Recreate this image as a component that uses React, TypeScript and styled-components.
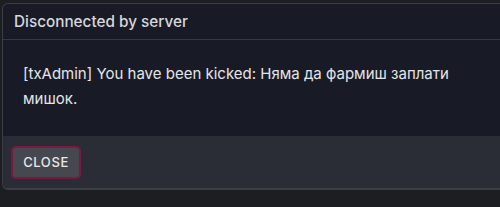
import React from "react";
import styled, { createGlobalStyle } from "styled-components";

const GlobalStyle = createGlobalStyle`
  html, body {
    margin: 0;
    padding: 0;
    background: #1d1e22;
    overflow: hidden;
  }
  body {
    font-family: Inter, "Noto Sans", "Liberation Sans", sans-serif;
  }
`;

const Page = styled.div`
  width: 500px;
  height: 207px;
  padding: 3px 0 0 2px;
  box-sizing: border-box;
  overflow: hidden;
`;

const Dialog = styled.div`
  width: 520px;
  background: #181b26;
  border: 1px solid #3b3e46;
  border-bottom-width: 2px;
  border-radius: 6px;
  overflow: hidden;
  box-sizing: border-box;
`;

const Header = styled.div`
  height: 36px;
  display: flex;
  align-items: center;
  padding: 0 11px;
  border-bottom: 1px solid #353842;
  box-sizing: border-box;
`;

const Title = styled.h1`
  margin: 0;
  font-size: 15.3px;
  font-weight: 500;
  color: #d6d7db;
`;

const Body = styled.div`
  height: 96px;
  padding: 21px 45px 0 20px;
  box-sizing: border-box;
`;

const Message = styled.p`
  margin: 0;
  font-size: 15px;
  line-height: 25px;
  color: #e4e5e8;
`;

const Footer = styled.div`
  height: 52px;
  background: #2a2d35;
  display: flex;
  align-items: center;
  padding: 0 8px;
  box-sizing: border-box;
`;

const Button = styled.button`
  width: 70px;
  height: 33px;
  background: #45484e;
  border: 2px solid #7a1a43;
  border-radius: 5px;
  color: #e8e8ea;
  font-family: Inter, "Noto Sans", "Liberation Sans", sans-serif;
  font-size: 13px;
  font-weight: 500;
  letter-spacing: 0.6px;
  cursor: pointer;
`;

export default function App() {
  return (
    <>
      <GlobalStyle />
      <Page>
        <Dialog>
          <Header>
            <Title>Disconnected by server</Title>
          </Header>
          <Body>
            <Message>
              [txAdmin] You have been kicked: Няма да фармиш заплати мишок.
            </Message>
          </Body>
          <Footer>
            <Button>CLOSE</Button>
          </Footer>
        </Dialog>
      </Page>
    </>
  );
}
